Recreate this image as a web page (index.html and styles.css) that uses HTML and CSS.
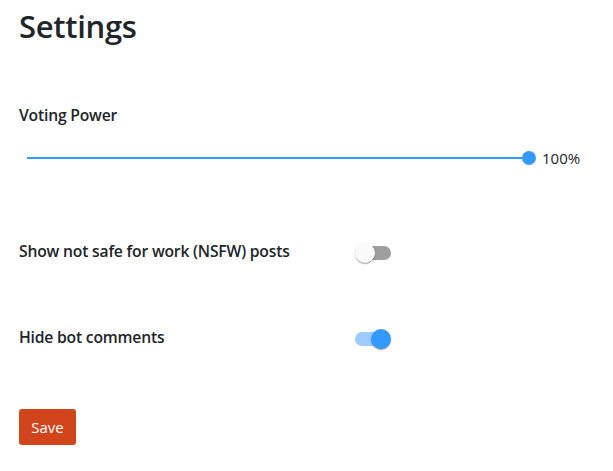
FILE: index.html
```html
<!DOCTYPE html>
<html lang="en">
<head>
  <meta charset="UTF-8">
  <meta name="viewport" content="width=device-width, initial-scale=1.0">
  <title>Settings</title>
  <link rel="stylesheet" href="styles.css">
</head>
<body>
  <div class="settings">
    <h1>Settings</h1>

    <div class="field">
      <label class="label">Voting Power</label>
      <div class="slider-row">
        <div class="slider">
          <div class="slider-track"></div>
          <div class="slider-thumb"></div>
        </div>
        <span class="slider-value">100%</span>
      </div>
    </div>

    <div class="toggle-row nsfw">
      <span class="label">Show not safe for work (NSFW) posts</span>
      <span class="switch">
        <span class="switch-track"></span>
        <span class="switch-thumb"></span>
      </span>
    </div>

    <div class="toggle-row bots">
      <span class="label">Hide bot comments</span>
      <span class="switch on">
        <span class="switch-track"></span>
        <span class="switch-thumb"></span>
      </span>
    </div>

    <button class="save">Save</button>
  </div>
</body>
</html>
```

FILE: styles.css
```css
body {
  margin: 0;
  font-family: "Open Sans", "Noto Sans", sans-serif;
  color: #212529;
  background: #fff;
}
.settings {
  padding: 0 19px;
}
h1 {
  font-size: 31px;
  font-weight: 600;
  margin: 0;
  padding-top: 4px;
  line-height: 44px;
  letter-spacing: -0.3px;
}
.label {
  font-size: 15.7px;
  font-weight: 600;
  line-height: 20px;
  letter-spacing: -0.2px;
}
.field {
  margin-top: 56px;
}
.slider-row {
  display: flex;
  align-items: center;
  margin-top: 22px;
}
.slider {
  position: relative;
  width: 509px;
  height: 14px;
  margin-left: 8px;
}
.slider-track {
  position: absolute;
  left: 0;
  right: 7px;
  top: 6px;
  height: 2px;
  background: #3399ff;
}
.slider-thumb {
  position: absolute;
  right: 0;
  top: 0;
  width: 14px;
  height: 14px;
  border-radius: 50%;
  background: #3399ff;
}
.slider-value {
  margin-left: 6px;
  font-size: 15px;
  line-height: 20px;
}
.toggle-row {
  display: flex;
  align-items: flex-start;
}
.toggle-row .label {
  width: 336px;
}
.nsfw {
  margin-top: 73px;
}
.bots {
  margin-top: 64px;
}
.switch {
  position: relative;
  width: 36px;
  height: 20px;
  margin-top: 2px;
  display: inline-block;
}
.switch-track {
  position: absolute;
  left: 2px;
  right: 0;
  top: 3px;
  height: 14px;
  border-radius: 7px;
  background: #9e9e9e;
}
.switch-thumb {
  position: absolute;
  left: 0;
  top: 0;
  width: 20px;
  height: 20px;
  border-radius: 50%;
  background: #fafafa;
  box-shadow: 0 2px 1px -1px rgba(0,0,0,0.2), 0 1px 1px 0 rgba(0,0,0,0.14), 0 1px 3px 0 rgba(0,0,0,0.12);
}
.switch.on .switch-track {
  left: 0;
  right: 2px;
  background: #9ccbff;
}
.switch.on .switch-thumb {
  left: 16px;
  background: #3399ff;
}
.save {
  margin-top: 60px;
  width: 57px;
  height: 36px;
  border: none;
  border-radius: 3px;
  background: #d0451b;
  color: #fff;
  font-family: "Open Sans", "Noto Sans", sans-serif;
  font-size: 15px;
  padding: 0;
}
```
